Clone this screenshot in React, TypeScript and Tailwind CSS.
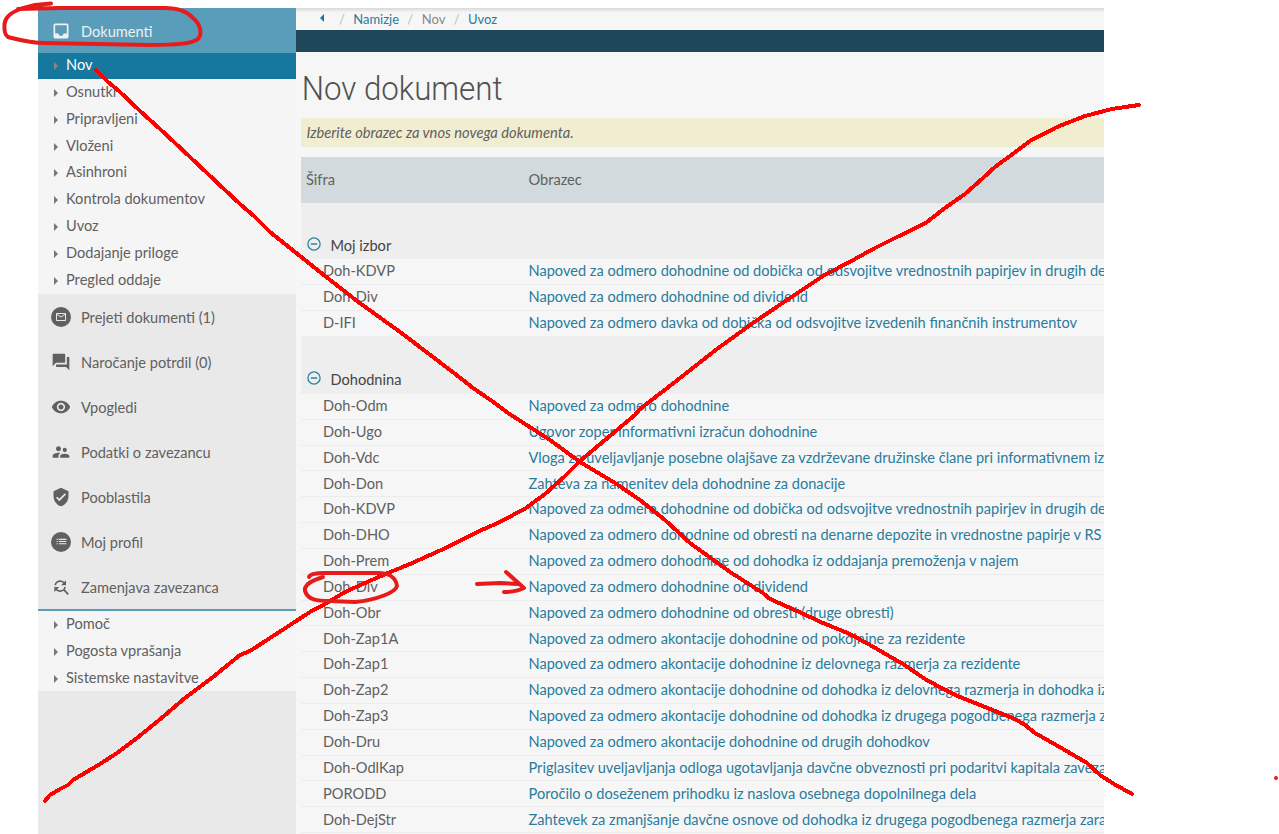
import React from "react";
import {
  MdFindReplace,
  MdInbox,
  MdList,
  MdMailOutline,
  MdQuestionAnswer,
  MdSupervisorAccount,
  MdVerifiedUser,
  MdVisibility,
} from "react-icons/md";

const subItems = [
  "Osnutki",
  "Pripravljeni",
  "Vloženi",
  "Asinhroni",
  "Kontrola dokumentov",
  "Uvoz",
  "Dodajanje priloge",
  "Pregled oddaje",
];

const helpItems = ["Pomoč", "Pogosta vprašanja", "Sistemske nastavitve"];

function Round({ children }: { children: React.ReactNode }) {
  return (
    <span className="flex size-5 items-center justify-center rounded-full bg-[#606060] text-[#e9e9e9]">
      {children}
    </span>
  );
}

const mainItems = [
  { label: "Prejeti dokumenti (1)", icon: <Round><MdMailOutline size={12} /></Round> },
  { label: "Naročanje potrdil (0)", icon: <MdQuestionAnswer size={20} /> },
  { label: "Vpogledi", icon: <MdVisibility size={20} /> },
  { label: "Podatki o zavezancu", icon: <MdSupervisorAccount size={20} /> },
  { label: "Pooblastila", icon: <MdVerifiedUser size={20} /> },
  { label: "Moj profil", icon: <Round><MdList size={13} /></Round> },
  { label: "Zamenjava zavezanca", icon: <MdFindReplace size={20} /> },
];

const myForms = [
  ["Doh-KDVP", "Napoved za odmero dohodnine od dobička od odsvojitve vrednostnih papirjev in drugih deležev"],
  ["Doh-Div", "Napoved za odmero dohodnine od dividend"],
  ["D-IFI", "Napoved za odmero davka od dobička od odsvojitve izvedenih finančnih instrumentov"],
];

const incomeForms = [
  ["Doh-Odm", "Napoved za odmero dohodnine"],
  ["Doh-Ugo", "Ugovor zoper informativni izračun dohodnine"],
  ["Doh-Vdc", "Vloga za uveljavljanje posebne olajšave za vzdrževane družinske člane pri informativnem izračunu"],
  ["Doh-Don", "Zahteva za namenitev dela dohodnine za donacije"],
  ["Doh-KDVP", "Napoved za odmero dohodnine od dobička od odsvojitve vrednostnih papirjev in drugih deležev"],
  ["Doh-DHO", "Napoved za odmero dohodnine od obresti na denarne depozite in vrednostne papirje v RS"],
  ["Doh-Prem", "Napoved za odmero dohodnine od dohodka iz oddajanja premoženja v najem"],
  ["Doh-Div", "Napoved za odmero dohodnine od dividend"],
  ["Doh-Obr", "Napoved za odmero dohodnine od obresti (druge obresti)"],
  ["Doh-Zap1A", "Napoved za odmero akontacije dohodnine od pokojnine za rezidente"],
  ["Doh-Zap1", "Napoved za odmero akontacije dohodnine iz delovnega razmerja za rezidente"],
  ["Doh-Zap2", "Napoved za odmero akontacije dohodnine od dohodka iz delovnega razmerja in dohodka iz drugega"],
  ["Doh-Zap3", "Napoved za odmero akontacije dohodnine od dohodka iz drugega pogodbenega razmerja za"],
  ["Doh-Dru", "Napoved za odmero akontacije dohodnine od drugih dohodkov"],
  ["Doh-OdlKap", "Priglasitev uveljavljanja odloga ugotavljanja davčne obveznosti pri podaritvi kapitala zavezanca"],
  ["PORODD", "Poročilo o doseženem prihodku iz naslova osebnega dopolnilnega dela"],
  ["Doh-DejStr", "Zahtevek za zmanjšanje davčne osnove od dohodka iz drugega pogodbenega razmerja zaradi"],
];

function Caret({ fill = "#777" }: { fill?: string }) {
  return (
    <svg width="4" height="8" viewBox="0 0 4 8" className="mt-0.5 shrink-0">
      <path d="M0 0 4 4 0 8Z" fill={fill} />
    </svg>
  );
}

function SubItem({ label }: { label: string }) {
  return (
    <a className="flex h-[26.8px] items-center gap-2 pb-[0.8px] pl-4 text-[#606060]">
      <Caret />
      {label}
    </a>
  );
}

function GroupHeader({ label }: { label: string }) {
  return (
    <div className="flex h-[57.3px] shrink-0 items-end bg-[#eeeeee] pb-[3px] pl-1.5 text-[#444] first:h-14 first:pb-0.5">
      <svg width="14" height="14" viewBox="0 0 14 14" className="mr-[9.5px] mb-[6px]">
        <circle cx="7" cy="7" r="6.1" fill="none" stroke="#2f81a3" strokeWidth="1.3" />
        <path d="M3.8 7h6.4" stroke="#2f81a3" strokeWidth="1.5" />
      </svg>
      <span className="leading-[22px]">{label}</span>
    </div>
  );
}

function FormRow({ code, name }: { code: string; name: string }) {
  return (
    <div className="flex h-[25.85px] shrink-0 items-center border-b border-[#ececec] pb-[0.5px] pl-[22px]">
      <span className="w-[205.5px] shrink-0 text-[#606060]">{code}</span>
      <a className="whitespace-nowrap text-[#2a7b9c]">{name}</a>
    </div>
  );
}

export default function App() {
  return (
    <div className="relative h-[834px] w-[1279px] overflow-hidden bg-white pt-2 pl-[38px] font-['Lato',sans-serif] text-[14.6px]">
      <div className="flex h-[826px] w-[1066px] overflow-hidden bg-[#f5f5f5]">
        <nav className="flex w-[258px] shrink-0 flex-col bg-[#e9e9e9]">
          <a className="flex h-[45px] items-center gap-[10px] bg-[#5a9dba] pl-[13px] text-[#f0f0f0]">
            <MdInbox size={20} />
            <span className="pt-0.5">Dokumenti</span>
          </a>
          <a className="flex h-[26px] items-center gap-2 bg-[#16779f] pb-0.5 pl-4 text-white">
            <Caret fill="#8f8580" />
            Nov
          </a>
          <div className="h-[215px] bg-[#f5f5f5]">
            {subItems.map((label) => (
              <SubItem key={label} label={label} />
            ))}
          </div>
          {mainItems.map(({ label, icon }) => (
            <a key={label} className="flex h-[45px] items-center gap-[10px] pl-[13px] text-[#606060]">
              {icon}
              <span className="pt-0.5">{label}</span>
            </a>
          ))}
          <div className="h-[82px] border-t-2 border-[#5a9dba] bg-[#f5f5f5]">
            {helpItems.map((label) => (
              <SubItem key={label} label={label} />
            ))}
          </div>
        </nav>

        <main className="flex min-w-0 flex-1 flex-col overflow-hidden bg-[#f6f6f6]">
          <div className="flex h-[22px] shrink-0 items-center bg-linear-to-b from-[#d8d8d8] to-[#f6f6f6] to-20% pt-px pl-6 text-[13px] text-[#2a7b9c]">
            <svg width="4" height="8" viewBox="0 0 4 8" className="mb-1">
              <path d="M4 0 0 4 4 8Z" fill="#16779f" />
            </svg>
            <span className="ml-[15px] text-[#bbb]">/</span>
            <a className="ml-[8.3px]">Namizje</a>
            <span className="ml-[8.3px] text-[#bbb]">/</span>
            <span className="ml-[8.6px] text-[#888]">Nov</span>
            <span className="ml-[8.3px] text-[#bbb]">/</span>
            <a className="ml-[8.3px]">Uvoz</a>
          </div>
          <div className="h-[22px] shrink-0 bg-[#1f475a]" />
          <h1 className="flex h-[66px] shrink-0 origin-left scale-x-[.948] items-center pt-2 pl-[6px] font-['Roboto',sans-serif] text-[33px] font-light text-[#505050]">
            Nov dokument
          </h1>
          <div className="ml-[5px] flex h-[29px] shrink-0 items-center bg-[#f1edd1] pl-[5.5px] text-[14.7px] text-[#606060] italic">
            Izberite obrazec za vnos novega dokumenta.
          </div>
          <div className="mt-[10px] ml-[5px] flex h-[46px] shrink-0 items-center bg-[#d2dadd] pb-px pl-[5px] text-[#606060]">
            <span className="w-[222.5px]">Šifra</span>
            <span>Obrazec</span>
          </div>
          <div className="ml-[5px] flex flex-col">
            <GroupHeader label="Moj izbor" />
            {myForms.map(([code, name]) => (
              <FormRow key={code} code={code} name={name} />
            ))}
            <GroupHeader label="Dohodnina" />
            {incomeForms.map(([code, name]) => (
              <FormRow key={code} code={code} name={name} />
            ))}
          </div>
        </main>
      </div>

      <svg className="pointer-events-none absolute inset-0" width="1279" height="834" fill="none" strokeLinecap="round" strokeLinejoin="round">
        <g stroke="#ff0000" strokeWidth="4" shapeRendering="crispEdges">
          <path d="M96 70 108 82 119 91 140 111 160 129 190 157 225 190 240 204 255 217 270 232 290 248 325 276 357 301 400 332 433 357 463 380 473 388 492 401 508 413 550 440 580 462 615 483 640 500 665 520 690 543 730 572 763 593 770 599 797 611 823 623 850 634 870 645 903 664 925 679 945 690 960 697 980 705 1015 719 1025 725 1035 733 1063 749 1087 763 1100 775 1114 784 1132 794" />
          <path d="M45 801 50 795 60 789 68 785 73 780 100 764 117 753 137 738 158 721 185 698 213 677 240 655 250 651 287 627 310 612 325 604 345 592 365 583 388 573 410 564 450 546 475 533 500 522 526 508 545 494 565 476 580 461 605 440 635 415 640 409 675 382 717 349 753 323 787 300 823 276 855 259 875 248 897 237 910 231 927 222 945 208 965 194 983 178 995 167 1010 156 1030 141 1057 127 1085 116 1112 109 1125 107 1139 105" />
        </g>
        <g stroke="#e81b1b" strokeWidth="4">
          <path d="M51 3.500 35 5 20 9C10 13 5 18 4.500 24C4 30 5 35 8 37C20 40 30 43 45 43L150 45C175 45 192 44 198 39C203 33 200 24 193 18C186 10 176 8 165 8L60 8 18 9" />
          <path d="M323 577C310 581 304 586 305 591C308 600 317 601 330 601L355 602C377 600 396 592 397 586C396 577 388 573 378 573L325 573C315 573 310 574 309 577" />
          <path d="M477 584 500 583 518 584M506 572 524 588C518 591 512 592 504 592" />
        </g>
        <circle cx="1276" cy="778" r="2" fill="#e81b1b" />
      </svg>
    </div>
  );
}
